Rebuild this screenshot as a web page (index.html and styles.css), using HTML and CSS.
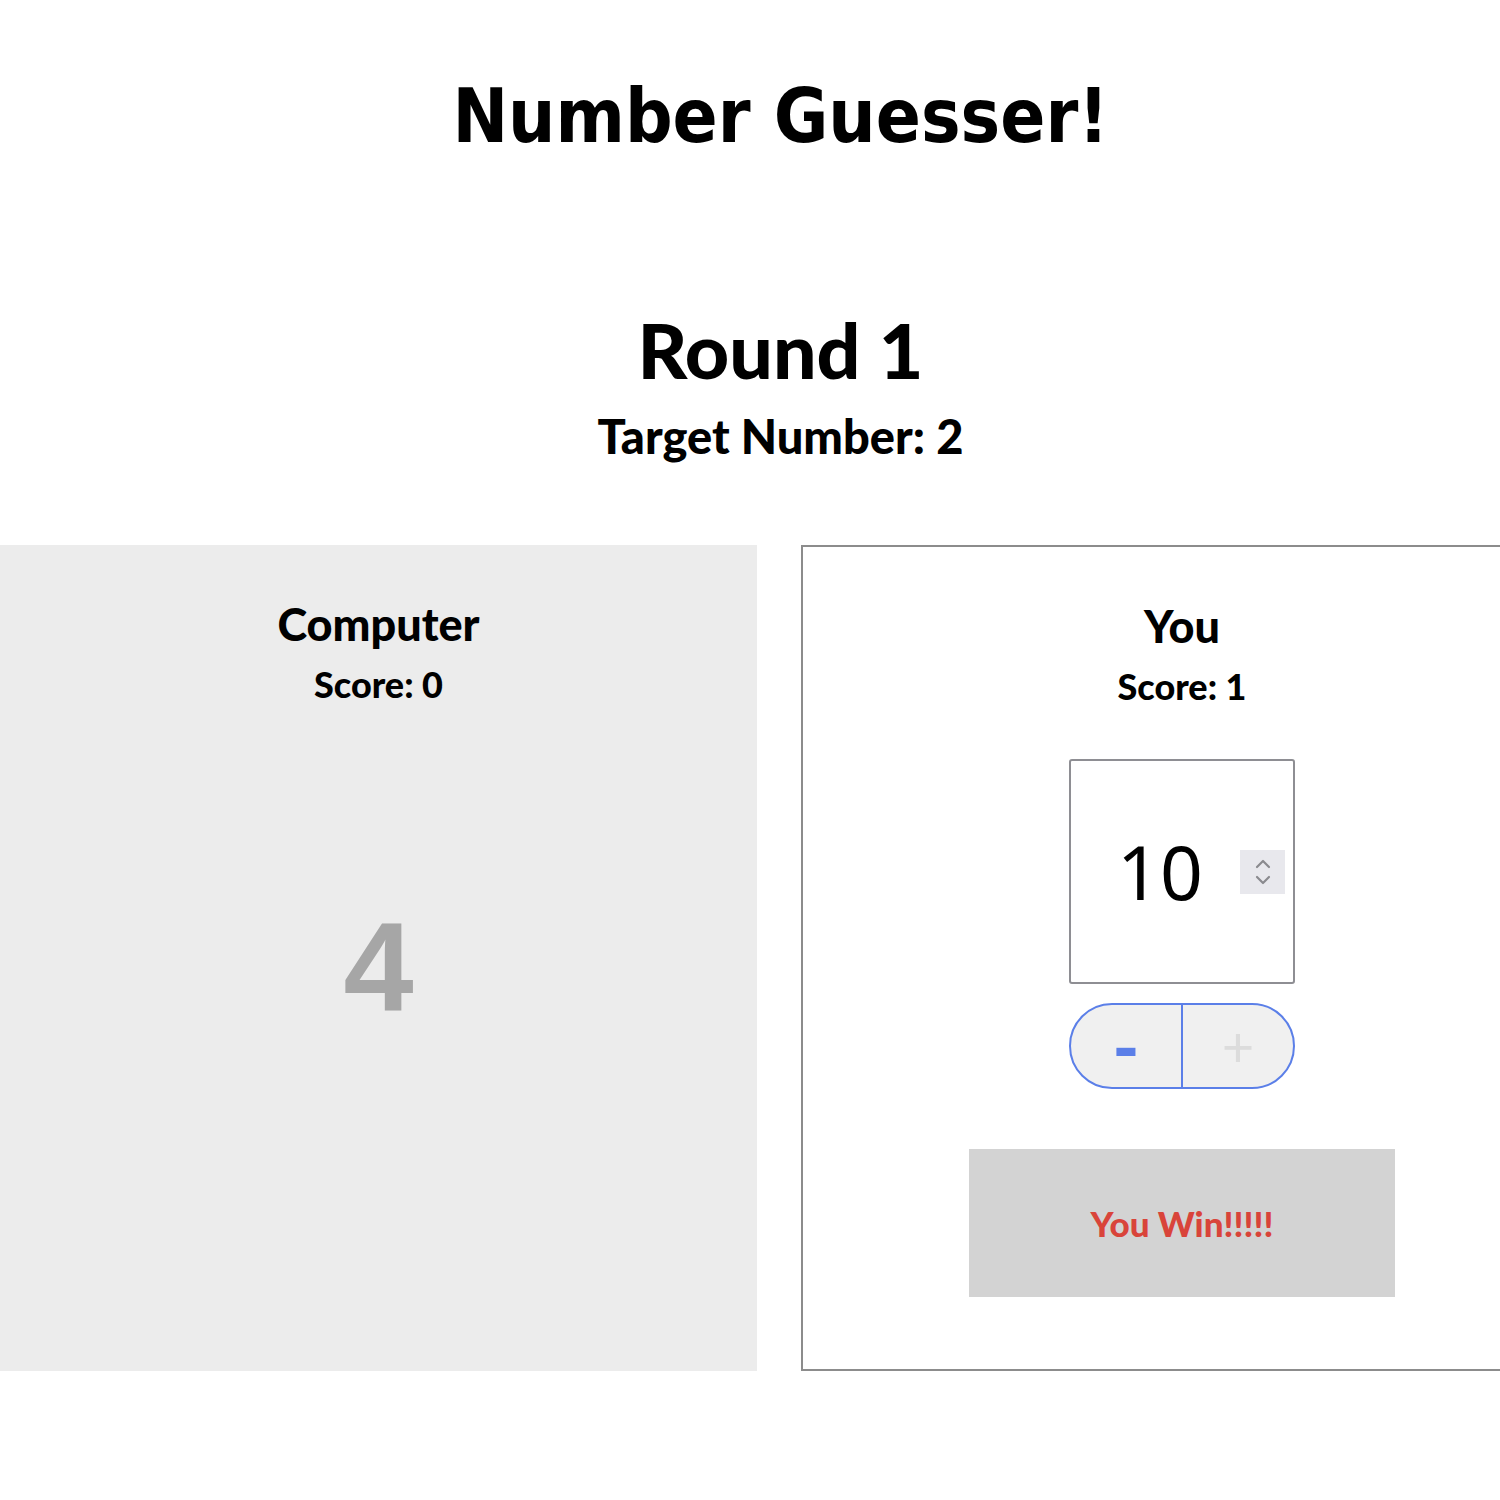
FILE: index.html
```html
<!DOCTYPE html>
<html lang="en">
<head>
<meta charset="utf-8">
<title>Number Guesser!</title>
<link rel="stylesheet" href="styles.css">
</head>
<body>
<div class="page">
  <h1 class="title">Number Guesser!</h1>
  <h2 class="round">Round 1</h2>
  <p class="target">Target Number: 2</p>
  <div class="panels">
    <section class="panel computer">
      <h3 class="name">Computer</h3>
      <p class="score">Score: 0</p>
      <div class="guess">4</div>
    </section>
    <section class="panel human">
      <h3 class="name">You</h3>
      <p class="score">Score: 1</p>
      <div class="number-input">
        <span class="value">10</span>
        <span class="spinner">
          <svg width="20" height="34" viewBox="0 0 20 34"><path d="M4 12 L10 6 L16 12" fill="none" stroke="#8a8a8f" stroke-width="2.2" stroke-linecap="round" stroke-linejoin="round"/><path d="M4 22 L10 28 L16 22" fill="none" stroke="#8a8a8f" stroke-width="2.2" stroke-linecap="round" stroke-linejoin="round"/></svg>
        </span>
      </div>
      <div class="stepper">
        <button class="step minus">-</button>
        <button class="step plus">+</button>
      </div>
      <div class="result">You Win!!!!!</div>
    </section>
  </div>
</div>
</body>
</html>
```
FILE: styles.css
```css
html, body {
  margin: 0;
  padding: 0;
  overflow: hidden;
  background: #ffffff;
}
.page {
  width: 1561px;
  font-family: "Lato", "Noto Sans", sans-serif;
  color: #000;
  display: flex;
  flex-direction: column;
  align-items: center;
}
.title {
  font-family: "DejaVu Sans Condensed", "DejaVu Sans", sans-serif;
  font-weight: bold;
  font-size: 74px;
  line-height: 1;
  margin: 79px 0 0;
}
.round {
  font-size: 77px;
  font-weight: 900;
  line-height: 1;
  margin: 158px 0 0;
}
.target {
  font-size: 47px;
  font-weight: 900;
  line-height: 1;
  margin: 25px 0 0;
}
.panels {
  margin-top: 85px;
  display: flex;
  gap: 44px;
  align-self: stretch;
}
.panel {
  box-sizing: border-box;
  height: 826px;
  display: flex;
  flex-direction: column;
  align-items: center;
}
.computer {
  width: 757px;
  background: #ececec;
}
.human {
  width: 760px;
  border: 2px solid #8c8c8c;
  border-right: none;
}
.name {
  font-size: 45px;
  font-weight: 900;
  line-height: 1;
  margin: 57px 0 0;
}
.score {
  font-size: 36px;
  font-weight: 900;
  line-height: 1;
  margin: 19px 0 0;
}
.guess {
  font-family: "Liberation Sans", Arial, sans-serif;
  font-weight: bold;
  font-size: 126px;
  line-height: 1;
  color: #a6a6a6;
  margin-top: 203px;
}
.number-input {
  box-sizing: border-box;
  width: 226px;
  height: 225px;
  margin-top: 55px;
  border: 2px solid #8e8e93;
  border-radius: 3px;
  display: flex;
  align-items: center;
  padding-left: 46px;
  padding-right: 8px;
}
.value {
  font-family: "Noto Sans", "Inter", sans-serif;
  font-size: 75px;
  line-height: 1;
  flex: 1;
}
.spinner {
  width: 45px;
  height: 44px;
  background: #e8e8ed;
  display: flex;
  align-items: center;
  justify-content: center;
}
.stepper {
  box-sizing: border-box;
  width: 226px;
  height: 86px;
  margin-top: 19px;
  border: 2px solid #5b7fe8;
  border-radius: 43px;
  background: #f0f0f0;
  display: flex;
  overflow: hidden;
}
.step {
  flex: 1;
  border: none;
  background: transparent;
  font-family: "Lato", sans-serif;
  font-size: 56px;
  font-weight: 900;
  padding: 0;
  margin: 0;
  line-height: 1;
}
.minus {
  color: #5b7fe8;
  font-size: 72px;
  border-right: 2px solid #5b7fe8;
}
.plus {
  color: #dcdcdc;
  font-weight: 400;
}
.result {
  width: 426px;
  height: 148px;
  margin-top: 60px;
  background: #d3d3d3;
  color: #d9443a;
  font-size: 35px;
  font-weight: 900;
  display: flex;
  align-items: center;
  justify-content: center;
}
```
